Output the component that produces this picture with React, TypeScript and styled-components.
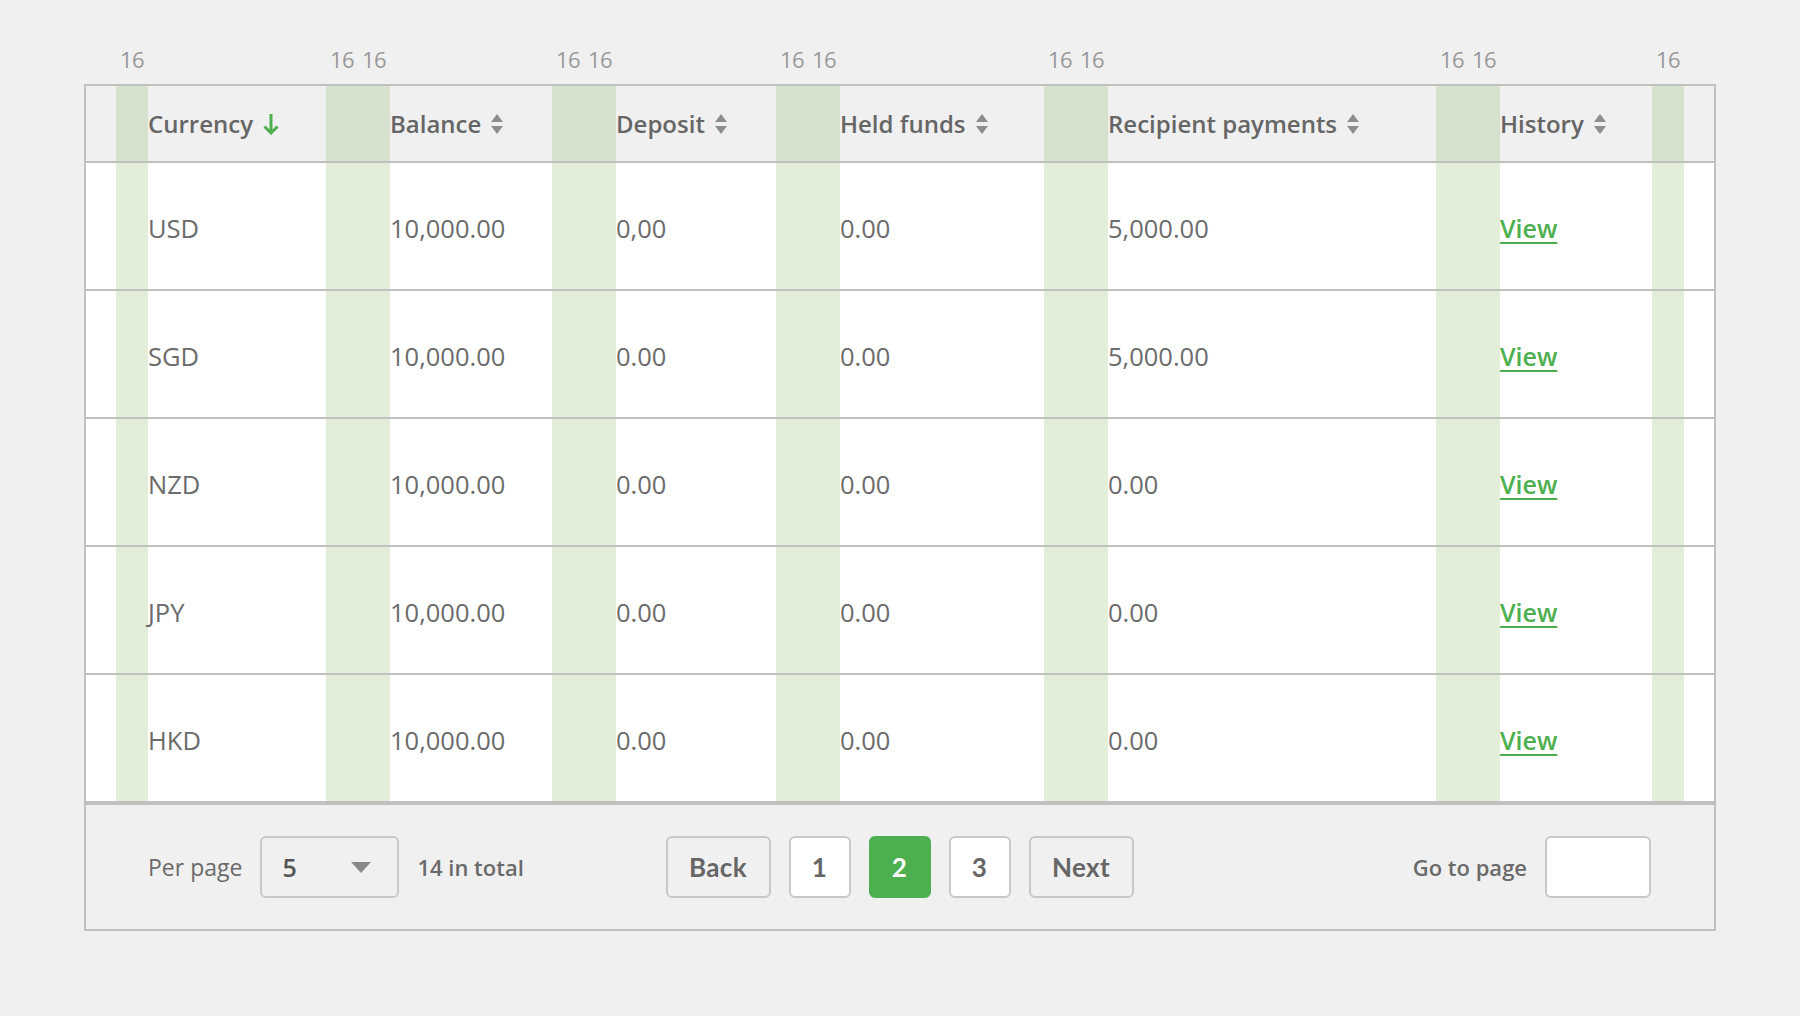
import styled, { createGlobalStyle } from 'styled-components';
import type { FC } from 'react';

const GlobalStyle = createGlobalStyle`
  html, body {
    margin: 0;
    padding: 0;
    background: #f0f0f0;
    font-family: "Open Sans", "Noto Sans", sans-serif;
    color: #666;
  }
`;

const COLUMNS = '242px 226px 224px 268px 392px 216px';
const PAD = 32;
const padTint = (alpha: string) => `rgba(110, 170, 70, ${alpha})`;

const Page = styled.div`
  padding: 46px 84px 0;
`;

const PadLabels = styled.div`
  display: grid;
  grid-template-columns: ${COLUMNS};
  padding: 0 32px;
  height: 26px;
  margin-bottom: 12px;
`;

const LabelCell = styled.div`
  display: flex;
  justify-content: space-between;
`;

const PadLabel = styled.span`
  width: ${PAD}px;
  text-align: center;
  font-size: 22px;
  line-height: 26px;
  letter-spacing: -0.5px;
  color: #999;
`;

const Table = styled.div`
  border: 2px solid #c0c0c0;
`;

const Row = styled.div<{ $header?: boolean }>`
  display: grid;
  grid-template-columns: ${COLUMNS};
  padding: 0 30px;
  height: ${(p) => (p.$header ? 75 : 126)}px;
  border-bottom: 2px solid #c0c0c0;
  background: ${(p) => (p.$header ? '#f0f0f0' : '#fff')};
`;

const Cell = styled.div<{ $header?: boolean }>`
  display: flex;
  align-items: center;
  gap: 10px;
  padding: ${(p) => (p.$header ? 0 : 3)}px ${PAD}px 0;
  font-size: ${(p) => (p.$header ? 24 : 25.5)}px;
  font-weight: ${(p) => (p.$header ? 600 : 400)};
  color: ${(p) => (p.$header ? '#666' : '#6b6b6b')};
  white-space: nowrap;
  background: linear-gradient(
    to right,
    ${padTint('0.2')} 0 ${PAD}px,
    transparent ${PAD}px calc(100% - ${PAD}px),
    ${padTint('0.2')} calc(100% - ${PAD}px)
  );
`;

const ViewLink = styled.a`
  color: #4caf50;
  font-size: 25px;
  font-weight: 600;
  text-decoration: underline;
  text-decoration-thickness: 2px;
  text-underline-offset: 4px;
  cursor: pointer;
`;

const Footer = styled.div`
  display: grid;
  grid-template-columns: 1fr auto 1fr;
  align-items: center;
  height: 124px;
  padding: 0 63px 0 62px;
  border-top: 2px solid #c0c0c0;
`;

const Group = styled.div<{ $end?: boolean }>`
  display: flex;
  align-items: center;
  gap: 18px;
  justify-self: ${(p) => (p.$end ? 'end' : 'start')};
`;

const FooterText = styled.span<{ $light?: boolean }>`
  font-size: ${(p) => (p.$light ? 23 : 22)}px;
  font-weight: ${(p) => (p.$light ? 500 : 600)};
  color: #6a6a6a;
`;

const Select = styled.div`
  display: flex;
  align-items: center;
  justify-content: space-between;
  box-sizing: border-box;
  width: 139px;
  height: 62px;
  padding: 0 26px 0 20px;
  border: 2px solid #c8c8c8;
  border-radius: 6px;
  font-size: 25px;
  font-weight: 600;
  color: #555;
`;

const Caret = styled.span`
  width: 0;
  height: 0;
  border-left: 10px solid transparent;
  border-right: 10px solid transparent;
  border-top: 11px solid #888;
`;

const PageButton = styled.button<{ $wide?: boolean; $active?: boolean }>`
  box-sizing: border-box;
  height: 62px;
  width: ${(p) => (p.$wide ? 105 : 62)}px;
  border: 2px solid ${(p) => (p.$active ? '#4caf50' : '#c8c8c8')};
  border-radius: 6px;
  background: ${(p) => (p.$active ? '#4caf50' : p.$wide ? 'transparent' : '#fff')};
  color: ${(p) => (p.$active ? '#fff' : '#666')};
  font-family: Lato, "Open Sans", sans-serif;
  font-size: 26px;
  font-weight: 700;
  letter-spacing: 0.4px;
  padding: 0;
  cursor: pointer;
`;

const PageInput = styled.input`
  box-sizing: border-box;
  width: 106px;
  height: 62px;
  border: 2px solid #c8c8c8;
  border-radius: 6px;
  background: #fff;
  outline: none;
`;

const SortArrow: FC = () => (
  <svg width="16" height="22" viewBox="0 0 16 22" fill="none">
    <path d="M8 1v19M1.5 13.5 8 20l6.5-6.5" stroke="#4caf50" strokeWidth="3" />
  </svg>
);

const SortBoth: FC = () => (
  <svg width="12" height="22" viewBox="0 0 12 22">
    <path d="M6 1 12 9H0z M0 13h12L6 21z" fill="#8c8c8c" />
  </svg>
);

const headers = ['Currency', 'Balance', 'Deposit', 'Held funds', 'Recipient payments', 'History'];

const rows = [
  ['USD', '10,000.00', '0,00', '0.00', '5,000.00'],
  ['SGD', '10,000.00', '0.00', '0.00', '5,000.00'],
  ['NZD', '10,000.00', '0.00', '0.00', '0.00'],
  ['JPY', '10,000.00', '0.00', '0.00', '0.00'],
  ['HKD', '10,000.00', '0.00', '0.00', '0.00'],
];

const App: FC = () => (
  <>
    <GlobalStyle />
    <Page>
      <PadLabels>
        {headers.map((h) => (
          <LabelCell key={h}>
            <PadLabel>16</PadLabel>
            <PadLabel>16</PadLabel>
          </LabelCell>
        ))}
      </PadLabels>
      <Table>
        <Row $header>
          {headers.map((h, i) => (
            <Cell $header key={h}>
              {h}
              {i === 0 ? <SortArrow /> : <SortBoth />}
            </Cell>
          ))}
        </Row>
        {rows.map((r) => (
          <Row key={r[0]}>
            {r.map((v, i) => (
              <Cell key={i}>{v}</Cell>
            ))}
            <Cell>
              <ViewLink>View</ViewLink>
            </Cell>
          </Row>
        ))}
        <Footer>
          <Group>
            <FooterText $light>Per page</FooterText>
            <Select>
              5
              <Caret />
            </Select>
            <FooterText>14 in total</FooterText>
          </Group>
          <Group>
            <PageButton $wide>Back</PageButton>
            <PageButton>1</PageButton>
            <PageButton $active>2</PageButton>
            <PageButton>3</PageButton>
            <PageButton $wide>Next</PageButton>
          </Group>
          <Group $end>
            <FooterText>Go to page</FooterText>
            <PageInput />
          </Group>
        </Footer>
      </Table>
    </Page>
  </>
);

export default App;
